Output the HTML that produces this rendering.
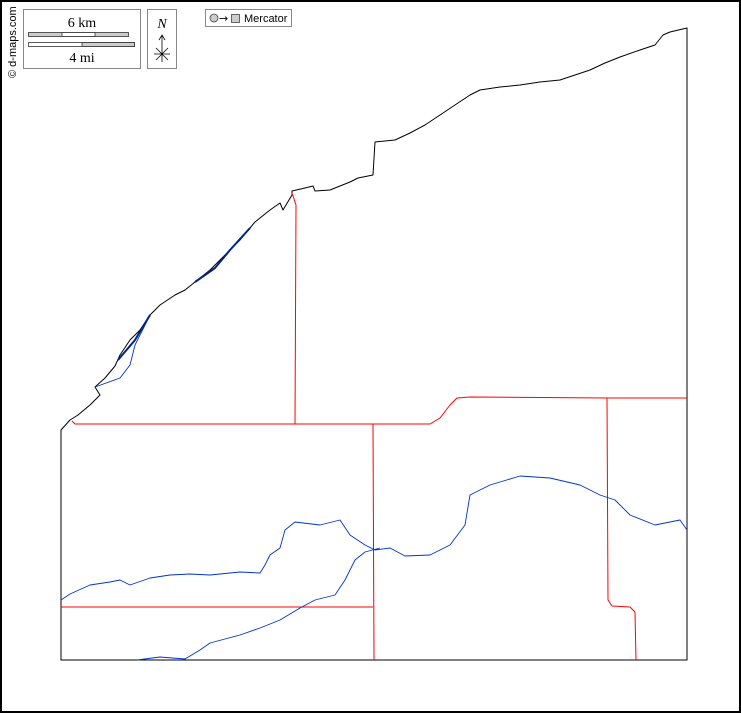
<!DOCTYPE html><html><head><style>
body{margin:0;background:#fff;}
</style></head><body>
<svg width="741" height="713" viewBox="0 0 741 713" xmlns="http://www.w3.org/2000/svg" style="display:block">
<rect x="1" y="1" width="739" height="711" fill="#fff" stroke="#000" stroke-width="2"/>
<g fill="none" stroke-linejoin="round">
<path stroke="#000" stroke-width="1" d="M61,430 L70,420 78,415 90,405 100,395 95,387 105,378 115,366 120,355 130,340 140,330 150,315 160,305 175,295 185,290 195,282 210,270 225,255 240,240 255,222 270,210 280,203 283,210 292,195 292,191 305,188 313,186 315,191 330,190 350,182 358,178 373,175 375,142 395,140 410,133 425,125 440,115 455,105 470,95 480,90 500,87 520,85 540,82 560,80 575,75 590,70 605,63 620,57 640,50 655,45 663,35 670,32 687,28 L687,660 L61,660 Z"/>
<path stroke="#f00" stroke-width="1" d="M292,193 L296,205 295,424 M72,421 L75,424 295,424 430,424 440,418 450,405 457,398 470,397 607,398 687,398 M373,424 L374,660 M607,398 L608,600 612,606 630,607 635,612 636,660 M61,607 L373,607"/>
<path stroke="#0033cc" stroke-width="0.9" d="M61,600 L70,594 90,585 110,582 120,580 130,585 150,578 170,575 190,574 210,575 240,572 260,573 265,565 270,555 280,548 285,530 295,522 320,525 340,520 350,535 365,545 375,550 390,548 405,556 430,555 450,545 465,525 470,495 490,485 520,476 550,478 580,485 600,495 615,500 630,515 655,525 680,520 687,530 M137,660 L160,657 185,659 200,650 210,643 240,635 260,628 280,620 300,608 315,600 335,595 345,580 355,560 365,552 380,548 M95,387 L120,378 130,365 135,345 150,315"/>
<path stroke="#002288" stroke-width="2" d="M118,360 L135,340 150,315 M195,282 L215,268 230,250 250,228"/>
</g>
<rect x="23.5" y="9.5" width="117" height="59" fill="#fff" stroke="#888"/>
<text x="82" y="27" font-size="14" text-anchor="middle" font-family="Liberation Serif">6 km</text>
<rect x="28.5" y="32.5" width="100" height="4" fill="#ccc" stroke="#333" stroke-width="0.8"/>
<rect x="62" y="32.5" width="33" height="4" fill="#fff" stroke="#333" stroke-width="0.8"/>
<rect x="28.5" y="42.5" width="106" height="4" fill="#fff" stroke="#333" stroke-width="0.8"/>
<rect x="82" y="42.5" width="52.5" height="4" fill="#ccc" stroke="#333" stroke-width="0.8"/>
<text x="82" y="62" font-size="14" text-anchor="middle" font-family="Liberation Serif">4 mi</text>
<rect x="147.5" y="9.5" width="29" height="59" fill="#fff" stroke="#888"/>
<text x="162" y="28" font-size="14" font-style="italic" text-anchor="middle" font-family="Liberation Serif">N</text>
<path d="M162,36 V62 M159,40 L162,35 165,40 M154,54 H170 M156,48 L168,60 M168,48 L156,60" stroke="#000" stroke-width="0.8" fill="none"/>
<rect x="205.5" y="9.5" width="86" height="17" fill="#fff" stroke="#888"/>
<circle cx="214" cy="18" r="4" fill="#ccc" stroke="#444" stroke-width="0.8"/>
<text x="219" y="22" font-size="11" font-family="DejaVu Sans">→</text>
<rect x="231.5" y="14.5" width="8" height="8" fill="#ccc" stroke="#444" stroke-width="0.8"/>
<text x="244" y="22" font-size="11" font-family="Liberation Sans">Mercator</text>
<text transform="translate(16,78) rotate(-90)" font-size="11" font-family="Liberation Sans">© d-maps.com</text>
</svg>
</body></html>
